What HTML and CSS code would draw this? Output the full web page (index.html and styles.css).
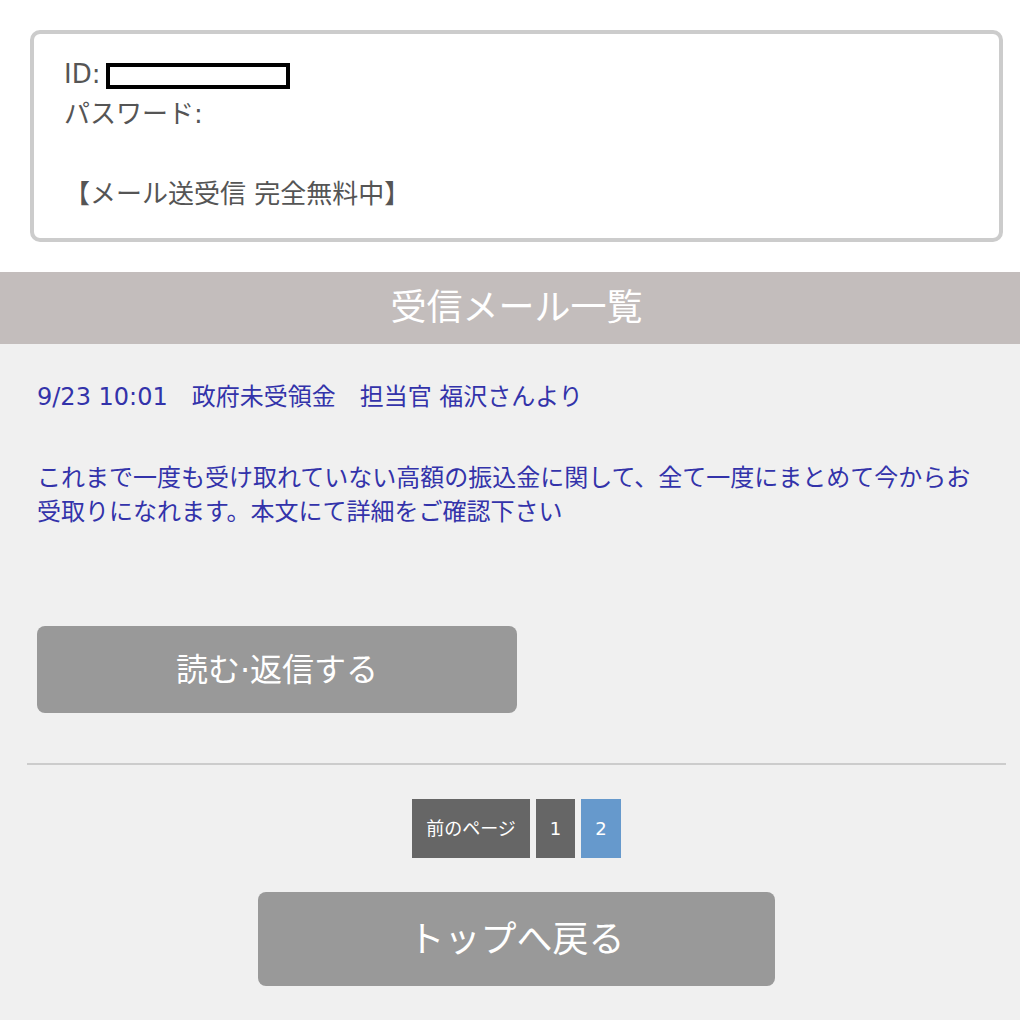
FILE: index.html
```html
<!DOCTYPE html>
<html lang="ja">
<head>
<meta charset="utf-8">
<title>受信メール一覧</title>
<link rel="stylesheet" href="styles.css">
</head>
<body>
<div class="page">
  <div class="account">
    <div class="line">ID:<span class="id-field"></span></div>
    <div class="line">パスワード:</div>
    <div class="line">&nbsp;</div>
    <div class="line">【メール送受信 完全無料中】</div>
  </div>

  <h1 class="title">受信メール一覧</h1>

  <div class="content">
    <div class="mail">
      <div class="mail-head">9/23 10:01　政府未受領金　担当官 福沢さんより</div>
      <div class="mail-body">これまで一度も受け取れていない高額の振込金に関して、全て一度にまとめて今からお受取りになれます。本文にて詳細をご確認下さい</div>
      <a class="btn btn-read" href="#">読む·返信する</a>
    </div>
    <div class="separator"></div>
    <div class="pager">
      <a class="pg" href="#">前のページ</a>
      <a class="pg" href="#">1</a>
      <span class="pg pg-current">2</span>
    </div>
    <div class="back-wrap">
      <a class="btn btn-top" href="#">トップへ戻る</a>
    </div>
  </div>
</div>
</body>
</html>
```

FILE: styles.css
```css
html, body {
  margin: 0;
  padding: 0;
  overflow: hidden;
  background: #f0f0f0;
}

body {
  font-family: "DejaVu Sans", "Noto Sans CJK JP", sans-serif;
}

.page {
  width: 1033px;
  background: #ffffff;
  padding-top: 30px;
}

.account {
  margin: 0 30px;
  border: 4px solid #cccccc;
  border-radius: 10px;
  background: #ffffff;
  padding: 20px 30px 24px 30px;
  color: #555555;
  font-size: 26px;
  line-height: 40px;
}

.id-field {
  display: inline-block;
  width: 176px;
  height: 18px;
  border: 4px solid #000000;
  vertical-align: -6px;
  margin-left: 6px;
}

.title {
  margin: 30px 0 0 0;
  height: 72px;
  background: #c3bdbc;
  color: #ffffff;
  font-size: 36px;
  font-weight: normal;
  line-height: 72px;
  text-align: center;
}

.content {
  background: #f0f0f0;
  padding: 36px 0 34px 0;
}

.mail {
  padding: 0 55px 0 37px;
  color: #3333aa;
  font-size: 24px;
  line-height: 34px;
}

.mail-body {
  margin-top: 47px;
}

.btn {
  display: flex;
  align-items: center;
  justify-content: center;
  background: #999999;
  color: #ffffff;
  text-decoration: none;
  border-radius: 8px;
}

.btn-read {
  margin-top: 97px;
  width: 480px;
  height: 87px;
  font-size: 32px;
}

.separator {
  margin: 50px 27px 0 27px;
  height: 2px;
  background: #cccccc;
}

.pager {
  margin-top: 34px;
  display: flex;
  justify-content: center;
  gap: 6px;
}

.pg {
  display: block;
  height: 59px;
  line-height: 59px;
  padding: 0 14px;
  background: #666666;
  color: #ffffff;
  font-size: 18px;
  text-decoration: none;
}

.pg-current {
  background: #6699cc;
}

.back-wrap {
  margin-top: 34px;
  display: flex;
  justify-content: center;
}

.btn-top {
  width: 517px;
  height: 94px;
  font-size: 36px;
  padding-bottom: 6px;
  box-sizing: border-box;
}
```
